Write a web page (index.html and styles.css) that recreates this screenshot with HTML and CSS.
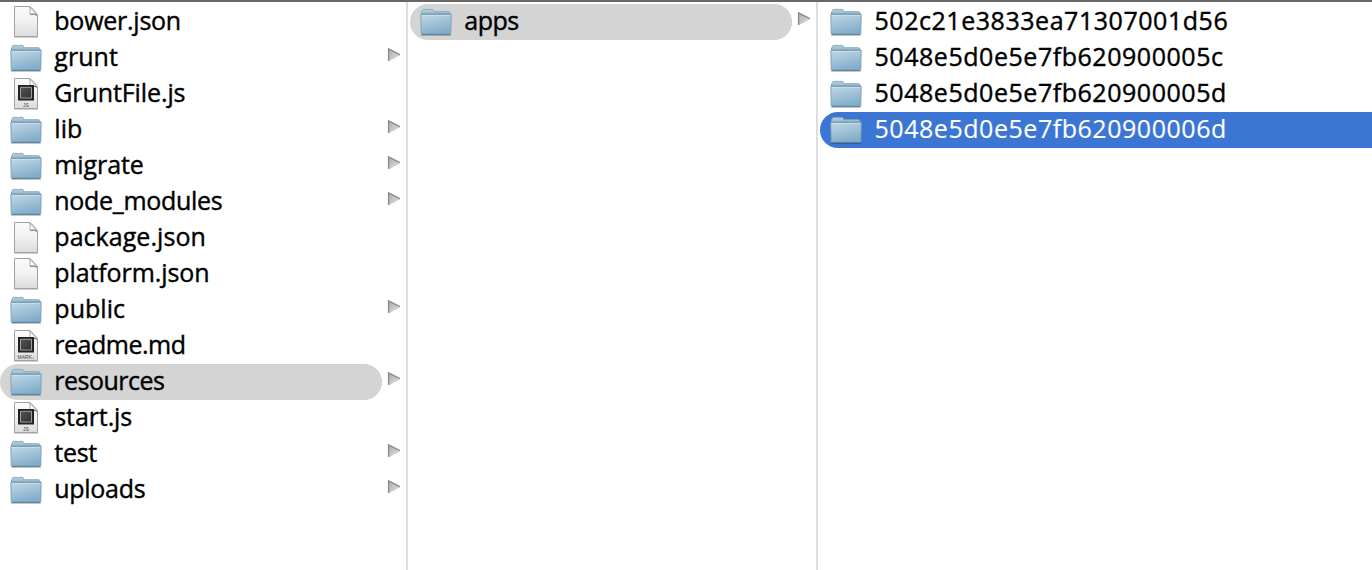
FILE: index.html
```
<!DOCTYPE html>
<html lang="en">
<head>
<meta charset="utf-8">
<title>resources</title>
<link rel="stylesheet" href="styles.css">
</head>
<body>
<svg class="defs" width="0" height="0" aria-hidden="true">
  <defs>
    <linearGradient id="paper" x1="0" y1="0" x2="0" y2="1"><stop offset="0" stop-color="#fafafa"/><stop offset=".45" stop-color="#f3f3f3"/><stop offset="1" stop-color="#dcdcdc"/></linearGradient>
    <linearGradient id="front" x1="0" y1="0" x2=".35" y2="1"><stop offset="0" stop-color="#c3d9e7"/><stop offset="1" stop-color="#83aeca"/></linearGradient>
    <linearGradient id="tab" x1="0" y1="0" x2="0" y2="1"><stop offset="0" stop-color="#b2cddd"/><stop offset="1" stop-color="#86adc6"/></linearGradient>
    <linearGradient id="arrow" x1="0" y1="0" x2="1" y2="1"><stop offset="0" stop-color="#aaa"/><stop offset="1" stop-color="#e2e2e2"/></linearGradient>
    <linearGradient id="chip" x1="0" y1="0" x2="1" y2="1"><stop offset="0" stop-color="#555"/><stop offset="1" stop-color="#303030"/></linearGradient>
    <symbol id="folder" viewBox="0 0 32 36">
      <path d="M1 31.5h30" stroke="#000" stroke-opacity=".22"/>
      <path d="M1.5 14V8L2.4 6.8V6.3Q2.5 5.4 3.5 5.4H12.2Q13.1 5.4 13.4 6.3L13.8 7.7H28.6Q29.8 7.7 29.9 9L30.5 14Z" fill="url(#tab)" stroke="#86a5b9" stroke-width=".9"/>
      <path d="M.8 10.6Q.8 9.9 1.6 9.9H30.4Q31.2 9.9 31.2 10.6L30.8 29.5Q30.7 30.5 29.7 30.5H2.2Q1.3 30.5 1.2 29.5Z" fill="url(#front)" stroke="#7a9fb6" stroke-width=".9"/>
      <path d="M1 10.3h30" stroke="#6e98b2" stroke-width="1"/>
      <path d="M1.6 11.4h28.8" stroke="#d0e1eb" stroke-width=".8"/>
      <path d="M1.8 30.3h28.4" stroke="#577f99" stroke-width="1"/>
    </symbol>
    <symbol id="page" viewBox="0 0 32 36">
      <path d="M4 33.5h24" stroke="#000" stroke-opacity=".18"/>
      <path d="M4.5 2.5H19.2Q20.2 2.5 21 3.3L26.7 9.4Q27.5 10.3 27.5 11.4V32.5H4.5Z" fill="url(#paper)" stroke="#a2a2a2"/>
      <path d="M19.6 2.8Q20.6 6.2 20 10.2Q23.8 9.2 27.2 11Z" fill="#fff" stroke="#a2a2a2" stroke-width=".9"/>
      <path d="M20.2 10.3Q23.8 9.5 27 11.3" fill="none" stroke="#777" stroke-width="1"/>
    </symbol>
    <symbol id="code" viewBox="0 0 32 36">
      <use href="#page"/>
      <path d="M8 9h16v15.5H8z" fill="#222"/>
      <path d="M10.5 11.3h11v10.8h-11z" fill="url(#chip)" stroke="#aaa" stroke-width=".9"/>
    </symbol>
    <symbol id="more" viewBox="0 0 14 16"><path d="M1 1.2 13 7.9 1 14.3Z" fill="url(#arrow)"/><path d="M1.6 14V1.8L12.8 7.6" fill="none" stroke="#8b8b8b" stroke-width="1.4"/><path d="M2 14 13 8" stroke="#b5b5b5" stroke-width=".7" stroke-dasharray="1 1"/></symbol>
  </defs>
</svg>
<main class="browser">
  <section class="column">
    <div class="row"><svg class="icon"><use href="#page"/></svg><span class="name tight">bower.json</span></div>
    <div class="row"><svg class="icon"><use href="#folder"/></svg><span class="name">grunt</span><svg class="more"><use href="#more"/></svg></div>
    <div class="row"><svg class="icon" viewBox="0 0 32 36"><use href="#code"/><text class="kind" x="16" y="30.5">JS</text></svg><span class="name snug">GruntFile.js</span></div>
    <div class="row"><svg class="icon"><use href="#folder"/></svg><span class="name">lib</span><svg class="more"><use href="#more"/></svg></div>
    <div class="row"><svg class="icon"><use href="#folder"/></svg><span class="name snug">migrate</span><svg class="more"><use href="#more"/></svg></div>
    <div class="row"><svg class="icon"><use href="#folder"/></svg><span class="name tighter">node_modules</span><svg class="more"><use href="#more"/></svg></div>
    <div class="row"><svg class="icon"><use href="#page"/></svg><span class="name">package.json</span></div>
    <div class="row"><svg class="icon"><use href="#page"/></svg><span class="name snug">platform.json</span></div>
    <div class="row"><svg class="icon"><use href="#folder"/></svg><span class="name">public</span><svg class="more"><use href="#more"/></svg></div>
    <div class="row"><svg class="icon" viewBox="0 0 32 36"><use href="#code"/><text class="kind" x="16" y="30.5">MARK↓</text></svg><span class="name tightest">readme.md</span></div>
    <div class="row open"><svg class="icon"><use href="#folder"/></svg><span class="name tightest">resources</span><svg class="more"><use href="#more"/></svg></div>
    <div class="row"><svg class="icon" viewBox="0 0 32 36"><use href="#code"/><text class="kind" x="16" y="30.5">JS</text></svg><span class="name snug">start.js</span></div>
    <div class="row"><svg class="icon"><use href="#folder"/></svg><span class="name tighter">test</span><svg class="more"><use href="#more"/></svg></div>
    <div class="row"><svg class="icon"><use href="#folder"/></svg><span class="name tighter">uploads</span><svg class="more"><use href="#more"/></svg></div>
  </section>
  <section class="column inset">
    <div class="row open"><svg class="icon"><use href="#folder"/></svg><span class="name tightest">apps</span><svg class="more"><use href="#more"/></svg></div>
  </section>
  <section class="column inset last">
    <div class="row"><svg class="icon"><use href="#folder"/></svg><span class="name hash">502c21e3833ea71307001d56</span></div>
    <div class="row"><svg class="icon"><use href="#folder"/></svg><span class="name hash">5048e5d0e5e7fb620900005c</span></div>
    <div class="row"><svg class="icon"><use href="#folder"/></svg><span class="name hash">5048e5d0e5e7fb620900005d</span></div>
    <div class="row selected"><svg class="icon"><use href="#folder"/></svg><span class="name hash">5048e5d0e5e7fb620900006d</span></div>
  </section>
</main>
</body>
</html>
```
FILE: styles.css
```
* { box-sizing: border-box; }
body { margin: 0; background: #fff; color: #000; font-family: "Open Sans", "Noto Sans", sans-serif; }
.defs { display: block; }
.browser { display: flex; height: 570px; border-top: 2px solid #676767; overflow: hidden; }
.column { flex: none; width: 408px; padding-top: 2px; border-right: 2px solid #dedede; }
.column.inset { width: 410px; padding-left: 2px; }
.column.last { flex: 1; border-right: 0; }
.row { display: flex; align-items: flex-start; height: 36px; padding-left: 10px; }
.open { background: radial-gradient(circle at 364px 18px, #d4d4d4 17.7px, transparent 18.3px), linear-gradient(#d4d4d4, #d4d4d4) 0 0 / 364px 100% no-repeat; border-radius: 18px 0 0 18px; }
.selected { background: #3c76d4; color: #fff; border-radius: 18px 0 0 18px; }
.icon { flex: none; width: 32px; height: 36px; }
.name { flex: 1; margin-left: 12.3px; font-size: 25px; font-weight: 500; line-height: 32px; letter-spacing: .05px; white-space: nowrap; -webkit-text-stroke: .4px currentColor; }
.name.snug { letter-spacing: -.1px; }
.name.tight { letter-spacing: -.25px; }
.name.tighter { letter-spacing: -.3px; }
.name.tightest { letter-spacing: -.5px; }
.name.hash { margin-left: 12.5px; letter-spacing: .54px; }
.selected .name { -webkit-text-stroke-width: .15px; }
.more { flex: none; width: 14px; height: 16px; margin: 7px 5px 0 0; }
.kind { font: 5px "Liberation Sans", sans-serif; fill: #444; text-anchor: middle; }
```
